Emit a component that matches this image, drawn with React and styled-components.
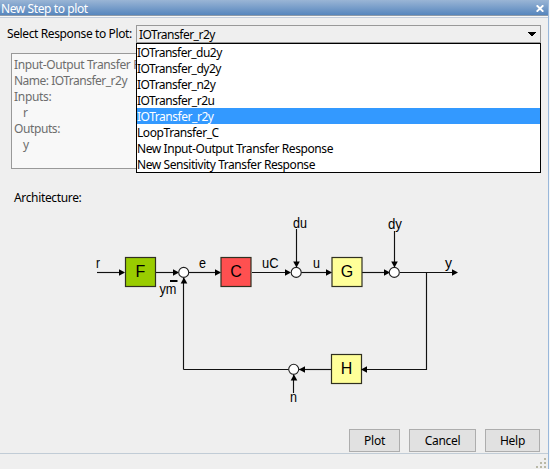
import React from "react";
import styled, { createGlobalStyle } from "styled-components";

const GlobalStyle = createGlobalStyle`
  * { box-sizing: border-box; }
  html, body { margin: 0; background: #f4f7fa; overflow: hidden; }
  button { margin: 0; }
`;

const Window = styled.div`
  width: 549px;
  height: 469px;
  display: flex;
  flex-direction: column;
  background: #efefef;
  border-right: 1px solid #98b7da;
  color: #000;
  font: 12px/16px "Noto Sans", "Open Sans", sans-serif;
  white-space: pre;
`;

const TitleBar = styled.header`
  height: 16px;
  flex: none;
  display: flex;
  align-items: center;
  justify-content: space-between;
  padding: 2px 4px 0 1px;
  color: #fff;
  background: linear-gradient(#9ab5d5, #5686be);
  border-bottom: 1px solid #8d9aa8;
`;

const TitleRule = styled.div`
  height: 2px;
  flex: none;
  background: #f8f8f8;
  border-bottom: 1px solid #c3cddb;
`;

const Label = styled.span`
  letter-spacing: ${(p) => p.$track ?? 0}px;
`;

const Content = styled.main`
  height: 435px;
  flex: none;
  display: flex;
  flex-direction: column;
  padding: 7px 8px 0 0;
`;

const SelectRow = styled.div`
  height: 18px;
  display: flex;
  padding-left: 7px;
`;

const SelectLabel = styled.div`
  width: 129px;
  flex: none;
  padding-top: 1px;
`;

const Select = styled.div`
  position: relative;
  width: 405px;
  height: 18px;
  flex: none;
  display: flex;
  justify-content: space-between;
  padding: 1px 4px 0 2px;
  border: 1px solid #999;
`;

const Menu = styled.ul`
  position: absolute;
  z-index: 1;
  top: 17px;
  left: -1px;
  width: 405px;
  margin: 0;
  padding: 0;
  list-style: none;
  background: #fff;
  border: 1px solid #000;
`;

const Option = styled.li`
  height: 16px;
  padding: 1px 0 0 0;
  color: ${(p) => (p.$selected ? "#fff" : "#000")};
  background: ${(p) => (p.$selected ? "#3399ff" : "#fff")};
`;

const Summary = styled.section`
  width: 529px;
  height: 116px;
  margin: 10px 0 0 11px;
  padding: 3px 2px;
  color: #6d6d6d;
  background: #f8f8f8;
  border: 1px solid #999;
`;

const SummaryLine = styled.div`
  height: 16px;
  padding-left: ${(p) => (p.$nested ? 9 : 0)}px;
`;

const Heading = styled.div`
  height: 16px;
  margin: 21px 0 0 14px;
`;

const Diagram = styled.svg`
  display: block;
  width: 540px;
  height: 210px;
  flex: none;
  font-family: "Liberation Sans", Arial, sans-serif;
`;

const Signal = styled.text`
  font-size: 14px;
`;

const BlockName = styled.text`
  font-size: 16px;
  text-anchor: middle;
`;

const Actions = styled.div`
  display: flex;
  justify-content: flex-end;
  gap: 9px;
  margin-top: 13px;
`;

const Button = styled.button`
  width: ${(p) => p.$width}px;
  height: 23px;
  padding: 0;
  font: inherit;
  color: #000;
  background: #e1e1e1;
  border: 1px solid #adadad;
`;

const StatusBar = styled.footer`
  flex: 1;
  display: flex;
  justify-content: flex-end;
  align-items: flex-end;
  border-top: 1px solid #c1ccd6;
`;

const options = [
  ["IOTransfer_du2y", -0.53],
  ["IOTransfer_dy2y", -0.5],
  ["IOTransfer_n2y", -0.5],
  ["IOTransfer_r2u", -0.48],
  ["IOTransfer_r2y", -0.46],
  ["LoopTransfer_C", -0.42],
  ["New Input-Output Transfer Response", -0.42],
  ["New Sensitivity Transfer Response", -0.43],
];

const arrows = [
  [125, 272, 0], [179, 272, 0], [221, 272, 0], [291, 272, 0], [332, 272, 0],
  [390, 272, 0], [458, 272, 0], [296, 267, 90], [394, 267, 90],
  [183.5, 277, -90], [361, 369, 180], [299, 369, 180], [293.5, 374, -90],
];

const wires = [
  "M97 272.5H124", "M156 272.5H178", "M189 272.5H220", "M252 272.5H290",
  "M301 272.5H331", "M362 272.5H389", "M400 272.5H457",
  "M296.5 229V267", "M394.5 231V267", "M183.5 278V369.5",
  "M183.5 369.5H289", "M299 369.5H331", "M362 369.5H426.5V272.5", "M293.5 374V393",
];

const blocks = [
  ["F", 125, 257, "#99cc00"],
  ["C", 220.5, 257, "#ff5050"],
  ["G", 331.5, 257, "#ffff99"],
  ["H", 331, 354, "#ffff99"],
];

const signals = [
  ["r", 96, 268, 4], ["ym", 159.5, 294, 17], ["e", 199, 268, 7], ["uC", 262, 268, 16.5],
  ["du", 293, 228, 14], ["u", 313, 268, 7], ["dy", 388, 229, 14], ["y", 445, 268, 7],
  ["n", 290, 402, 7],
];

function Architecture() {
  return (
    <Diagram viewBox="0 206 540 210">
      <g fill="none" stroke="#111" strokeWidth="1.15">
        {wires.map((d) => <path key={d} d={d} />)}
      </g>
      {blocks.map(([name, x, y, fill]) => (
        <g key={name}>
          <rect x={x + 0.5} y={y + 0.5} width="30" height="29" fill={fill} stroke="#303020" strokeWidth="1.2" />
          <BlockName x={x + 15.5} y={y + 20}>{name}</BlockName>
        </g>
      ))}
      {arrows.map(([x, y, turn], i) => (
        <path key={i} d="M0 0L-6 -3.3V3.3Z" transform={`translate(${x + (turn % 180 === 0 ? 0 : 0.5)} ${y + 0.5}) rotate(${turn})`} />
      ))}
      <g fill="#fff" stroke="#202020" strokeWidth="1.1">
        <circle cx="183.7" cy="272.4" r="5" />
        <circle cx="296.2" cy="272.4" r="5" />
        <circle cx="394.3" cy="272.4" r="5" />
        <circle cx="293.7" cy="369.3" r="5" />
      </g>
      <path d="M170 281H177.5" stroke="#000" strokeWidth="2" />
      {signals.map(([name, x, y, w]) => (
        <Signal key={name} x={x} y={y} textLength={w} lengthAdjust="spacingAndGlyphs">{name}</Signal>
      ))}
    </Diagram>
  );
}

export default function App() {
  return (
    <>
      <GlobalStyle />
      <Window>
        <TitleBar>
          <Label $track={-0.4}>New Step to plot</Label>
          <svg width="8" height="7" viewBox="0 0 8 7">
            <path d="M0.7 0.3L7.3 6.7M7.3 0.3L0.7 6.7" stroke="#fff" strokeWidth="1.9" />
          </svg>
        </TitleBar>
        <TitleRule />
        <Content>
          <SelectRow>
            <SelectLabel><Label $track={-0.38}>Select Response to Plot:</Label></SelectLabel>
            <Select>
              <Label $track={-0.5}>IOTransfer_r2y</Label>
              <svg width="8" height="14" viewBox="0 0 8 14">
                <path d="M0 5H8V6H7V7H6V8H5V9H3V8H2V7H1V6H0Z" />
              </svg>
              <Menu>
                {options.map(([name, track]) => (
                  <Option key={name} $selected={name === "IOTransfer_r2y"}>
                    <Label $track={track}>{name}</Label>
                  </Option>
                ))}
              </Menu>
            </Select>
          </SelectRow>
          <Summary>
            <SummaryLine><Label $track={-0.38}>Input-Output Transfer R</Label></SummaryLine>
            <SummaryLine><Label $track={-0.5}>Name: IOTransfer_r2y</Label></SummaryLine>
            <SummaryLine><Label $track={-0.3}>Inputs:</Label></SummaryLine>
            <SummaryLine $nested>r</SummaryLine>
            <SummaryLine><Label $track={-0.4}>Outputs:</Label></SummaryLine>
            <SummaryLine $nested>y</SummaryLine>
          </Summary>
          <Heading><Label $track={-0.35}>Architecture:</Label></Heading>
          <Architecture />
          <Actions>
            <Button $width={51}><Label $track={-0.2}>Plot</Label></Button>
            <Button $width={67}><Label $track={-0.3}>Cancel</Label></Button>
            <Button $width={55}><Label $track={-0.3}>Help</Label></Button>
          </Actions>
        </Content>
        <StatusBar>
          <svg width="12" height="12" viewBox="0 0 12 12" fill="#b9b8a6">
            <path d="M8 1h2v2h-2zM4 5h2v2h-2zM8 5h2v2h-2zM0 9h2v2h-2zM4 9h2v2h-2zM8 9h2v2h-2z" />
          </svg>
        </StatusBar>
      </Window>
    </>
  );
}
